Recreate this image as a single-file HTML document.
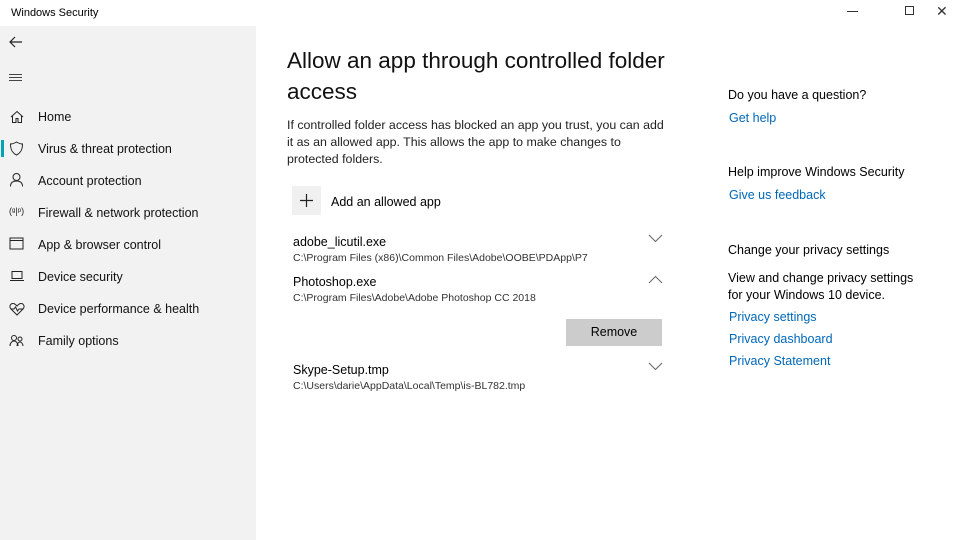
<!DOCTYPE html>
<html><head><meta charset="utf-8"><style>
*{margin:0;padding:0;box-sizing:border-box}
body{width:960px;height:540px;background:#fff;font-family:"Liberation Sans",sans-serif;color:#000;position:relative;overflow:hidden}
.abs{position:absolute;white-space:nowrap}
#side{position:absolute;left:0;top:26px;width:256px;height:514px;background:#f2f2f2}
.nav{position:absolute;left:38px;font-size:12.5px;color:#111}
.ic{position:absolute;left:9px}
.link{color:#0067b8;font-size:12.5px}
.r{font-size:12.5px}
.chev{position:absolute;left:648px}
</style></head><body>
<div class="abs" style="left:11px;top:7px;font-size:11px">Windows Security</div>
<div class="abs" style="left:847px;top:11px;width:11px;height:1px;background:#333"></div>
<div class="abs" style="left:905px;top:6px;width:9px;height:9px;border:1px solid #333"></div>
<div class="abs" style="left:936px;top:3px;font-size:14px;color:#333">✕</div>
<div id="side"></div>
<svg class="abs" style="left:8px;top:35px" width="16" height="14"><path d="M14 7H2M7 2L2 7l5 5" stroke="#222" stroke-width="1.2" fill="none"/></svg>
<svg class="abs" style="left:9px;top:73px" width="14" height="10"><path d="M0 1.5h13M0 4.5h13M0 7.5h13" stroke="#444" stroke-width="1"/></svg>
<div class="abs" style="left:1px;top:140px;width:3px;height:17px;background:#00a4b4"></div>
<svg class="ic abs" style="top:110px" width="16" height="14"><path d="M2 7L8 1.5 14 7M3.5 6v6.5h3.5v-4h2v4h3.5V6" stroke="#222" fill="none"/></svg>
<svg class="ic abs" style="top:141px" width="16" height="15"><path d="M7.5 1C5 2.5 3 3 1.5 3c0 6 2 9 6 11 4-2 6-5 6-11-1.5 0-3.5-.5-6-2z" stroke="#222" fill="none"/></svg>
<svg class="ic abs" style="top:172px" width="16" height="15"><circle cx="7.5" cy="5" r="3.5" stroke="#222" fill="none"/><path d="M1.5 14.5c0-4 2.5-5.5 6-5.5s6 1.5 6 5.5" stroke="#222" fill="none"/></svg>
<div class="ic abs" style="top:206px;font-size:9px;color:#222">(ᵍ|ᵖ)</div>
<svg class="ic abs" style="top:237px" width="16" height="13"><rect x="1" y="1" width="13" height="11" stroke="#222" fill="none"/><path d="M1 3.5h13" stroke="#222"/></svg>
<svg class="ic abs" style="top:270px" width="16" height="12"><rect x="3" y="1.5" width="10" height="7" stroke="#222" fill="none"/><path d="M1 10.5h14" stroke="#222"/></svg>
<svg class="ic abs" style="top:302px" width="16" height="14"><path d="M8 13L2 7C0 5 1 1.5 4 1.5c2 0 3 1.5 4 2.5 1-1 2-2.5 4-2.5 3 0 4 3.5 2 5.5zM2 7h3l1.5-2 2 4 1.5-2h4" stroke="#222" fill="none"/></svg>
<svg class="ic abs" style="top:333px" width="16" height="14"><circle cx="5" cy="5" r="2.5" stroke="#222" fill="none"/><circle cx="11" cy="6" r="2" stroke="#222" fill="none"/><path d="M1 13c0-3 2-5 4-5s4 2 4 5M8 13c0-2 1.5-4 3-4s3 2 3 4" stroke="#222" fill="none"/></svg>
<div class="nav abs" style="top:110px">Home</div>
<div class="nav abs" style="top:142px">Virus &amp; threat protection</div>
<div class="nav abs" style="top:174px">Account protection</div>
<div class="nav abs" style="top:206px">Firewall &amp; network protection</div>
<div class="nav abs" style="top:238px">App &amp; browser control</div>
<div class="nav abs" style="top:270px">Device security</div>
<div class="nav abs" style="top:302px">Device performance &amp; health</div>
<div class="nav abs" style="top:334px">Family options</div>

<div class="abs" style="left:287px;top:45px;font-size:22.5px;line-height:31px;color:#111">Allow an app through controlled folder<br>access</div>
<div class="abs" style="left:287px;top:117px;font-size:12.4px;line-height:17px;color:#222">If controlled folder access has blocked an app you trust, you can add<br>it as an allowed app. This allows the app to make changes to<br>protected folders.</div>
<div class="abs" style="left:292px;top:186px;width:29px;height:29px;background:#f0f0f0"></div>
<svg class="abs" style="left:299px;top:193px" width="15" height="15"><path d="M7.5 1v13M1 7.5h13" stroke="#222" stroke-width="1.2"/></svg>
<div class="abs r" style="left:331px;top:195px">Add an allowed app</div>
<div class="abs r" style="left:293px;top:235px">adobe_licutil.exe</div>
<div class="abs" style="left:293px;top:252px;font-size:10.5px;color:#333">C:\Program Files (x86)\Common Files\Adobe\OOBE\PDApp\P7</div>
<div class="abs r" style="left:293px;top:275px">Photoshop.exe</div>
<div class="abs" style="left:293px;top:292px;font-size:10.5px;color:#333">C:\Program Files\Adobe\Adobe Photoshop CC 2018</div>
<div class="abs" style="left:566px;top:319px;width:96px;height:27px;background:#cccccc;font-size:12.5px;text-align:center;line-height:27px">Remove</div>
<div class="abs r" style="left:293px;top:363px">Skype-Setup.tmp</div>
<div class="abs" style="left:293px;top:380px;font-size:10.5px;color:#333">C:\Users\darie\AppData\Local\Temp\is-BL782.tmp</div>
<svg class="chev abs" style="top:234px" width="15" height="9"><path d="M1 1l6.5 6.5L14 1" stroke="#666" fill="none"/></svg>
<svg class="chev abs" style="top:275px" width="15" height="9"><path d="M1 8l6.5-6.5L14 8" stroke="#666" fill="none"/></svg>
<svg class="chev abs" style="top:362px" width="15" height="9"><path d="M1 1l6.5 6.5L14 1" stroke="#666" fill="none"/></svg>

<div class="abs r" style="left:728px;top:88px">Do you have a question?</div>
<div class="abs link" style="left:729px;top:111px">Get help</div>
<div class="abs r" style="left:728px;top:165px">Help improve Windows Security</div>
<div class="abs link" style="left:729px;top:188px">Give us feedback</div>
<div class="abs r" style="left:728px;top:243px">Change your privacy settings</div>
<div class="abs r" style="left:728px;top:270px;line-height:17px;white-space:normal;width:200px">View and change privacy settings for your Windows 10 device.</div>
<div class="abs link" style="left:729px;top:310px">Privacy settings</div>
<div class="abs link" style="left:729px;top:332px">Privacy dashboard</div>
<div class="abs link" style="left:729px;top:354px">Privacy Statement</div>
</body></html>
